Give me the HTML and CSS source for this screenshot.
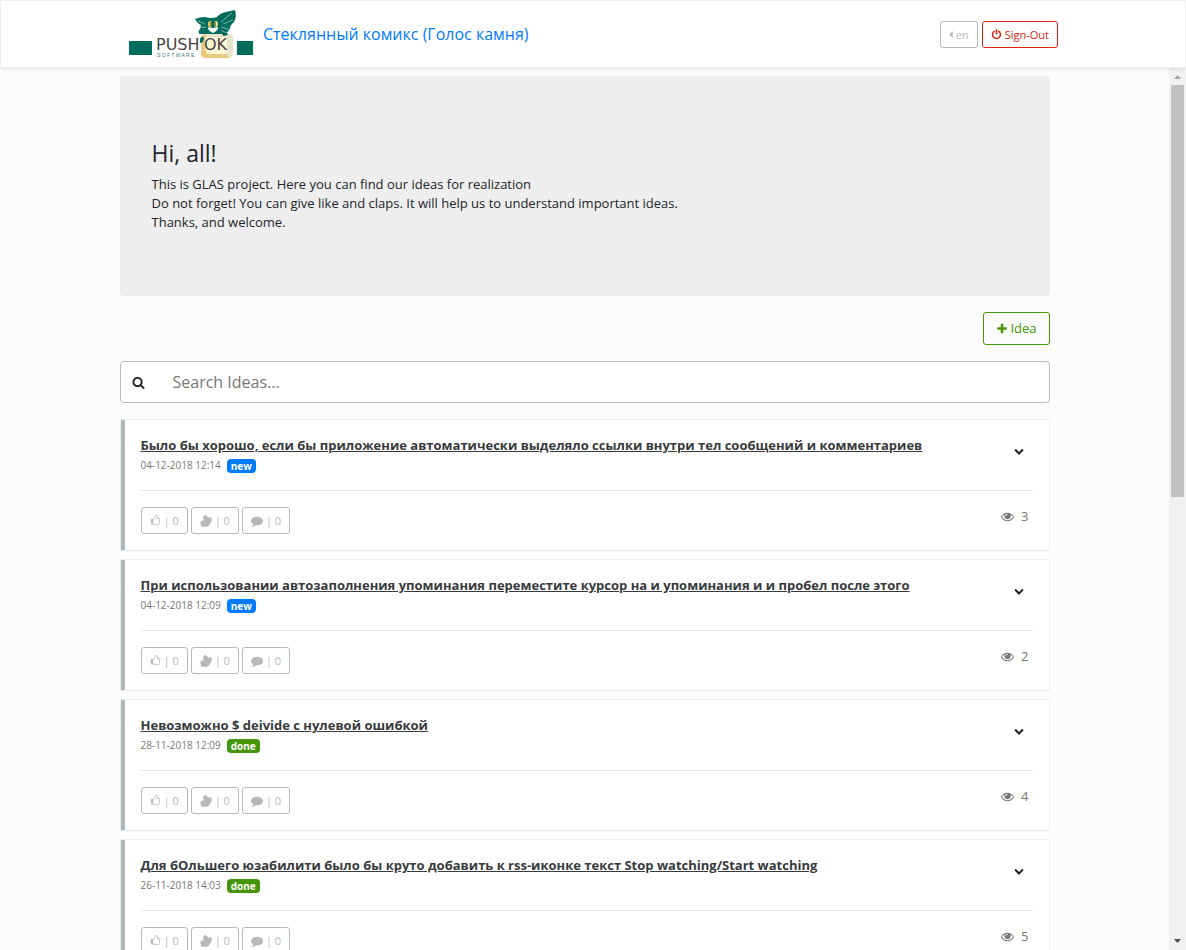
FILE: index.html
```
<!DOCTYPE html>
<html lang="ru">
<head>
<meta charset="utf-8">
<title>Стеклянный комикс (Голос камня)</title>
<link rel="stylesheet" href="styles.css">
</head>
<body>
<svg class="sprite" aria-hidden="true">
  <symbol id="i-power" viewBox="0 0 1792 1792"><path d="M1664 896q0 156-61 298t-164 245-245 164-298 61-298-61-245-164-164-245-61-298q0-182 80.500-343t226.500-270q43-32 95.500-25t83.500 50q32 42 24.500 94.500t-49.500 84.500q-98 74-151.500 181t-53.500 228q0 104 40.500 198.500t109.500 163.500 163.500 109.500 198.500 40.500 198.500-40.500 163.500-109.500 109.500-163.500 40.500-198.500q0-121-53.500-228t-151.500-181q-42-32-49.500-84.500t24.500-94.500q31-43 84-50t95 25q146 109 226.500 270t80.500 343zm-640-768v640q0 52-38 90t-90 38-90-38-38-90v-640q0-52 38-90t90-38 90 38 38 90z"/></symbol>
  <symbol id="i-plus" viewBox="0 0 1792 1792"><path d="M1600 736v192q0 40-28 68t-68 28h-416v416q0 40-28 68t-68 28h-192q-40 0-68-28t-28-68v-416h-416q-40 0-68-28t-28-68v-192q0-40 28-68t68-28h416v-416q0-40 28-68t68-28h192q40 0 68 28t28 68v416h416q40 0 68 28t28 68z"/></symbol>
  <symbol id="i-search" viewBox="0 0 1792 1792"><path d="M1216 832q0-185-131.500-316.500t-316.500-131.500-316.500 131.500-131.500 316.500 131.500 316.500 316.500 131.500 316.500-131.500 131.500-316.500zm512 832q0 52-38 90t-90 38q-54 0-90-38l-343-342q-179 124-399 124-143 0-273.500-55.500t-225-150-150-225-55.500-273.500 55.500-273.500 150-225 225-150 273.500-55.500 273.500 55.500 225 150 150 225 55.500 273.500q0 220-124 399l343 343q37 37 37 90z"/></symbol>
  <symbol id="i-comment" viewBox="0 0 1792 1792"><path d="M1792 896q0 174-120 321.500t-326 233-450 85.500q-70 0-145-8-198 175-460 242-49 14-114 22-17 2-30.500-9t-17.500-29v-1q-3-4-.5-12t2-10 4.500-9.500l6-9 7-8.500 8-9q7-8 31-34.500t34.500-38 31-39.500 32.500-51 27-59 26-76q-157-89-247.500-220t-90.500-281q0-130 71-248.500t191-204.500 286-136.500 348-50.500q244 0 450 85.500t326 233 120 321.500z"/></symbol>
  <symbol id="i-eye" viewBox="0 0 1792 1792"><path d="M1664 960q-152-236-381-353 61 104 61 225 0 185-131.500 316.500t-316.500 131.500-316.500-131.500-131.500-316.500q0-121 61-225-229 117-381 353 133 205 333.500 326.500t434.500 121.500 434.500-121.500 333.500-326.500zm-720-384q0-20-14-34t-34-14q-125 0-214.500 89.500t-89.500 214.500q0 20 14 34t34 14 34-14 14-34q0-86 61-147t147-61q20 0 34-14t14-34zm848 384q0 34-20 69-140 230-376.500 368.500t-499.500 138.500-499.500-139-376.500-368q-20-35-20-69t20-69q140-229 376.500-368t499.500-139 499.500 139 376.500 368q20 35 20 69z"/></symbol>
  <symbol id="i-like" viewBox="0 0 1792 1792"><path d="M256 1408q0-26-19-45t-45-19-45 19-19 45 19 45 45 19 45-19 19-45zm1280-640q0-51-39-89.500t-89-38.500h-352q0-58 48-159.500t48-160.500q0-98-32-145t-128-47q-26 26-38 85t-30.500 125.500-59.500 109.500q-22 23-77 91-4 5-23 30t-31.500 41-34.500 42.500-40 44-38.500 35.500-40 27-35.500 9h-32v640h32q13 0 31.500 3t33 6.500 38 11 35 11.500 35.500 12.500 29 10.500q211 73 342 73h121q192 0 192-167 0-26-5-56 30-16 47.500-52.500t17.500-73.500-18-69q53-50 53-119 0-25-10-55.500t-25-47.500q32-1 53.500-47t21.500-81zm128-1q0 89-49 163 9 33 9 69 0 77-38 144 3 21 3 43 0 101-60 178 1 139-85 219.500t-227 80.500h-129q-96 0-189.500-22.500t-216.500-65.500q-116-40-138-40h-288q-53 0-90.500-37.500t-37.500-90.500v-640q0-53 37.500-90.500t90.500-37.500h274q36-24 137-155 58-75 107-128 24-25 35.500-85.500t30.500-126.500 62-108q39-37 90-37 84 0 151 32.500t102 101.500 35 186q0 93-48 192h176q104 0 180 76t76 179z"/></symbol>
  <symbol id="i-clap" viewBox="0 0 12 12"><path d="M3.500 1.200Q4.500-.1 6 .5L8 2L9 3L10.300 2Q11.800 2.200 11.800 4.500Q11.900 7 10.200 8.200Q9.700 10.800 7 11.700Q4.500 12 1.500 11.400Q.6 10.700 1.200 10L.5 9.200Q.1 8.300.8 8L.5 6.800Q.5 5.800 1.600 5.800L3.600 5.500L3.800 4.600Q2.600 2.600 3.500 1.200Z"/></symbol>
  <symbol id="i-down" viewBox="0 0 1792 1792"><path d="M1683 808l-742 741q-19 19-45 19t-45-19l-742-741q-19-19-19-45.500t19-45.500l166-165q19-19 45-19t45 19l531 531 531-531q19-19 45-19t45 19l166 165q19 19 19 45.500t-19 45.500z"/></symbol>
</svg>

<header class="topbar">
  <div class="topbar-inner">
    <a class="brand" href="#">
      <svg class="logo" viewBox="0 0 126 50" role="img" aria-label="PushOK Software">
        <path d="M1 32h23v14H1zM109 32h16v14h-16z" fill="#006c5b"/>
        <path d="M67 10Q72 8 77 8Q83 10 89 8Q92 4 98 3L107 1Q109 8 106 13Q102 16 102 20Q99 23 98 25H72Q69 24 72 20L73 16Q69 14 67 10Z" fill="#006c5b"/>
        <path d="M93 13l11-9M95 15l10-4M70 12l7 3M70 19l8-1M93 18l10 3M93 21l7 4" fill="none" stroke="#c4e2db" stroke-width=".6"/>
        <path d="M80 18l5 1 5-1q1 3-5 6-6-3-5-6z" fill="#fff"/>
        <ellipse cx="82" cy="15" rx="2" ry="3" fill="#f3ce50"/><ellipse cx="88" cy="15" rx="2" ry="3" fill="#f6e58c"/>
        <path d="M83 13v4M87 13v4" stroke="#172d28"/>
        <rect x="73" y="25" width="31" height="24" rx="4" fill="#e9c981"/>
        <path d="M77 25h24q4 0 4 4v15q0 4-4 4l-4-4H81l-4-4z" fill="#e5e5cd"/>
        <rect x="78" y="28" width="21" height="17" rx="3" fill="#fff8d5"/>
        <path d="M72 30q2-4 4-1l-1 4-3 1zM94 24h5l1 2-5 1z" fill="#006c5b"/>
        <text class="logo-name" x="28" y="41">PUSH</text>
        <text class="logo-name" x="76" y="41">OK</text>
        <text class="logo-sub" x="29" y="48">S O F T W A R E</text>
      </svg>
      <span>Стеклянный комикс (Голос камня)</span>
    </a>
    <div class="actions">
      <button class="btn btn-small lang"><svg class="caret" viewBox="0 0 4 8"><path d="M4 0v8L0 4z"/></svg>en</button>
      <button class="btn btn-small signout"><svg class="icon"><use href="#i-power"/></svg>Sign-Out</button>
    </div>
  </div>
</header>

<div class="viewport">
  <main class="container">
    <section class="hero">
      <h1>Hi, all!</h1>
      <p>This is GLAS project. Here you can find our ideas for realization<br>Do not forget! You can give like and claps. It will help us to understand important ideas.<br>Thanks, and welcome.</p>
    </section>
    <div class="toolbar"><button class="btn add"><svg class="icon wide"><use href="#i-plus"/></svg>Idea</button></div>
    <label class="search"><svg class="icon"><use href="#i-search"/></svg><input type="text" placeholder="Search Ideas..." aria-label="Search Ideas"></label>

    <article class="card">
      <div class="card-head">
        <div><a class="title" href="#">Было бы хорошо, если бы приложение автоматически выделяло ссылки внутри тел сообщений и комментариев</a>
          <div class="meta"><time>04-12-2018 12:14</time><span class="badge">new</span></div></div>
        <button class="more" aria-label="More"><svg class="icon"><use href="#i-down"/></svg></button>
      </div>
      <div class="card-foot">
        <div class="votes"><button class="btn btn-small"><svg class="icon"><use href="#i-like"/></svg>| 0</button><button class="btn btn-small"><svg class="icon wide"><use href="#i-clap"/></svg>| 0</button><button class="btn btn-small"><svg class="icon wide"><use href="#i-comment"/></svg>| 0</button></div>
        <div class="views"><svg class="icon"><use href="#i-eye"/></svg>3</div>
      </div>
    </article>

    <article class="card">
      <div class="card-head">
        <div><a class="title" href="#">При использовании автозаполнения упоминания переместите курсор на и упоминания и и пробел после этого</a>
          <div class="meta"><time>04-12-2018 12:09</time><span class="badge">new</span></div></div>
        <button class="more" aria-label="More"><svg class="icon"><use href="#i-down"/></svg></button>
      </div>
      <div class="card-foot">
        <div class="votes"><button class="btn btn-small"><svg class="icon"><use href="#i-like"/></svg>| 0</button><button class="btn btn-small"><svg class="icon wide"><use href="#i-clap"/></svg>| 0</button><button class="btn btn-small"><svg class="icon wide"><use href="#i-comment"/></svg>| 0</button></div>
        <div class="views"><svg class="icon"><use href="#i-eye"/></svg>2</div>
      </div>
    </article>

    <article class="card">
      <div class="card-head">
        <div><a class="title" href="#">Невозможно $ deivide с нулевой ошибкой</a>
          <div class="meta"><time>28-11-2018 12:09</time><span class="badge done">done</span></div></div>
        <button class="more" aria-label="More"><svg class="icon"><use href="#i-down"/></svg></button>
      </div>
      <div class="card-foot">
        <div class="votes"><button class="btn btn-small"><svg class="icon"><use href="#i-like"/></svg>| 0</button><button class="btn btn-small"><svg class="icon wide"><use href="#i-clap"/></svg>| 0</button><button class="btn btn-small"><svg class="icon wide"><use href="#i-comment"/></svg>| 0</button></div>
        <div class="views"><svg class="icon"><use href="#i-eye"/></svg>4</div>
      </div>
    </article>

    <article class="card">
      <div class="card-head">
        <div><a class="title" href="#">Для бОльшего юзабилити было бы круто добавить к rss-иконке текст Stop watching/Start watching</a>
          <div class="meta"><time>26-11-2018 14:03</time><span class="badge done">done</span></div></div>
        <button class="more" aria-label="More"><svg class="icon"><use href="#i-down"/></svg></button>
      </div>
      <div class="card-foot">
        <div class="votes"><button class="btn btn-small"><svg class="icon"><use href="#i-like"/></svg>| 0</button><button class="btn btn-small"><svg class="icon wide"><use href="#i-clap"/></svg>| 0</button><button class="btn btn-small"><svg class="icon wide"><use href="#i-comment"/></svg>| 0</button></div>
        <div class="views"><svg class="icon"><use href="#i-eye"/></svg>5</div>
      </div>
    </article>
  </main>
  <div class="scrollbar" aria-hidden="true">
    <svg class="arrow up" viewBox="0 0 7 4"><path d="M0 4h7L3.500 0z"/></svg>
    <div class="track"><div class="thumb"></div></div>
    <svg class="arrow" viewBox="0 0 7 4"><path d="M0 0h7L3.500 4z"/></svg>
  </div>
</div>
</body>
</html>
```
FILE: styles.css
```
* { box-sizing: border-box; }
body {
  margin: 0;
  height: 100vh;
  display: flex;
  flex-direction: column;
  overflow: hidden;
  background: #fcfcfc;
  color: #212529;
  font: 13px/19px "Open Sans", "Noto Sans", sans-serif;
}
.sprite { display: none; }
.icon { width: 11px; height: 11px; fill: currentColor; flex: none; }
.icon.wide { width: 12px; height: 12px; }

.topbar {
  flex: none;
  z-index: 1;
  padding: 0 16px;
  background: #fff;
  border: 1px solid #eee;
  box-shadow: 0 1px 4px rgba(0, 0, 0, .12);
}
.topbar-inner {
  max-width: 930px;
  height: 66px;
  margin: 0 auto;
  display: flex;
  align-items: center;
  justify-content: space-between;
}
.brand {
  display: flex;
  align-items: center;
  gap: 9px;
  color: #007bff;
  font-size: 16px;
  line-height: 24px;
  text-decoration: none;
}
.logo { width: 126px; height: 50px; }
.logo-name { font: 16px "DejaVu Sans", sans-serif; fill: #4a4444; }
.logo-sub { font: 5px "Liberation Sans", sans-serif; fill: #2b8475; }
.actions { display: flex; gap: 4px; }

.btn {
  display: flex;
  align-items: center;
  justify-content: center;
  gap: 2px;
  height: 33px;
  padding: 0 12px;
  border: 1px solid #b8b8b8;
  border-radius: 3px;
  background: transparent;
  color: #b8b8b8;
  font: inherit;
}
.btn-small { height: 27px; padding: 0 8px; font-size: 11px; gap: 3px; }
.caret { width: 4px; height: 7px; fill: currentColor; }
.signout { color: #d9230f; border-color: #d9230f; }
.add { color: #469408; border-color: #469408; }

.viewport { flex: 1; min-height: 0; display: flex; }
.container { width: 100%; max-width: 930px; margin: 0 auto; padding-top: 8px; }
.hero {
  padding: 64px 32px;
  background: #eee;
  border-radius: 4px;
}
.hero h1 { margin: 0 0 8px; font-size: 23px; line-height: 27px; font-weight: 400; }
.hero p { margin: 0; }
.toolbar { display: flex; justify-content: flex-end; margin: 16px 0; }
.search {
  display: flex;
  align-items: center;
  gap: 28px;
  height: 42px;
  padding: 0 11px;
  margin-bottom: 16px;
  background: #fff;
  border: 1px solid #b8b8b8;
  border-radius: 4px;
}
.search .icon { width: 13px; height: 13px; }
.search input {
  flex: 1;
  padding: 0;
  border: 0;
  outline: 0;
  background: transparent;
  font: inherit;
  font-size: 16px;
}
.search input::placeholder { color: #777; opacity: 1; }

.card {
  margin-bottom: 8px;
  padding: 16px 16px 16px 20px;
  background: #fff;
  border: 1px solid #eee;
  box-shadow: inset 4px 0 #adb5bd;
}
.card-head {
  display: flex;
  justify-content: space-between;
  align-items: flex-start;
  padding-bottom: 15px;
  border-bottom: 1px solid #e5e5e5;
}
.title { display: block; color: #373a3c; font-weight: 700; text-decoration: underline; }
.meta { display: flex; align-items: center; gap: 6px; height: 20px; padding-top: 1px; color: #777; font-size: 10px; }
.badge {
  padding: 0 4px;
  border-radius: 4px;
  background: #007bff;
  color: #fff;
  font-weight: 700;
  line-height: 14px;
}
.badge.done { background: #469408; }
.more { display: flex; margin: 6px 9px 0 0; padding: 4px 0; border: 0; background: none; color: #212529; }
.more .icon { width: 10px; height: 10px; }
.card-foot { display: flex; justify-content: space-between; align-items: flex-start; padding-top: 16px; }
.votes { display: flex; gap: 3px; }
.views { display: flex; align-items: center; gap: 7px; padding-right: 4px; color: #777; }
.views .icon { width: 13px; height: 13px; }

.scrollbar {
  flex: none;
  width: 17px;
  padding: 7px 2px;
  display: flex;
  flex-direction: column;
  align-items: center;
  gap: 6px;
  background: #f1f1f1;
}
.track { flex: 1; width: 100%; }
.thumb { height: 48.6%; background: #c1c1c1; }
.arrow { width: 7px; height: 4px; fill: #505050; }
.arrow.up { fill: #a3a3a3; }
```
